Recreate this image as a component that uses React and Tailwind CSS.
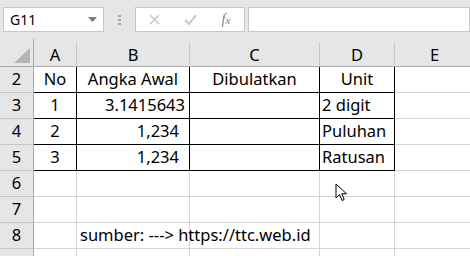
import React from "react";

const COLS = [
  { key: "A", w: 43 },
  { key: "B", w: 113 },
  { key: "C", w: 130 },
  { key: "D", w: 75 },
  { key: "E", w: 80 },
];

const ROWS = [
  { n: 2, cells: [["No", "center"], ["Angka Awal", "center"], ["Dibulatkan", "center"], ["Unit", "center"], ["", ""]], table: true },
  { n: 3, cells: [["1", "center"], ["3.1415643", "right"], ["", ""], ["2 digit", "left"], ["", ""]], table: true },
  { n: 4, cells: [["2", "center"], ["1,234", "right-pad"], ["", ""], ["Puluhan", "left"], ["", ""]], table: true },
  { n: 5, cells: [["3", "center"], ["1,234", "right-pad"], ["", ""], ["Ratusan", "left"], ["", ""]], table: true },
  { n: 6, cells: [["", ""], ["", ""], ["", ""], ["", ""], ["", ""]] },
  { n: 7, cells: [["", ""], ["", ""], ["", ""], ["", ""], ["", ""]] },
  { n: 8, cells: [["", ""], ["sumber: ---> https://ttc.web.id", "overflow"], ["", ""], ["", ""], ["", ""]] },
  { n: "", cells: [["", ""], ["", ""], ["", ""], ["", ""], ["", ""]] },
];

const alignClass = {
  center: "justify-center",
  right: "justify-end pr-[4px]",
  "right-pad": "justify-end pr-[10px]",
  left: "justify-start pl-[2px]",
  overflow: "justify-start pl-[3px] overflow-visible whitespace-nowrap",
  "": "",
};

function Cell({ text, align, width, black }) {
  const border = black
    ? "border-r border-b border-black"
    : "border-r border-b border-[#d4d4d4]";
  return (
    <div
      className={`relative flex items-center shrink-0 h-[26px] ${border} ${alignClass[align]} ${align === "overflow" ? "z-10" : "overflow-hidden"}`}
      style={{ width }}
    >
      <span className="whitespace-nowrap text-[16.5px] text-black leading-none">{text}</span>
    </div>
  );
}

export default function App() {
  return (
    <div className="relative w-[470px] h-[256px] overflow-hidden bg-white font-['Noto_Sans',sans-serif] select-none">
      <div className="h-[39px] bg-[#e6e6e6] flex items-start pt-[7px] pl-[3px]">
        <div className="w-[101px] h-[25px] border border-[#c6c6c6] bg-white flex items-center justify-between pl-[6px] pr-[6px]">
          <span className="text-[14px] text-black">G11</span>
          <svg width="9" height="5" viewBox="0 0 9 5">
            <path d="M0 0 H9 L4.5 5 Z" fill="#7a7a7a" />
          </svg>
        </div>
        <div className="w-[31px] h-[25px] flex flex-col items-center justify-center gap-[2px]">
          <span className="w-[3px] h-[2px] bg-[#a6a6a6]" />
          <span className="w-[3px] h-[2px] bg-[#a6a6a6]" />
          <span className="w-[3px] h-[2px] bg-[#a6a6a6]" />
        </div>
        <div className="w-[110px] h-[25px] border border-[#c6c6c6] bg-white flex items-center">
          <div className="w-[36px] flex justify-center">
            <svg width="11" height="11" viewBox="0 0 11 11">
              <path d="M1 1 L10 10 M10 1 L1 10" stroke="#c3c3c3" strokeWidth="1.4" />
            </svg>
          </div>
          <div className="w-[36px] flex justify-center">
            <svg width="13" height="11" viewBox="0 0 13 11">
              <path d="M1 6 L5 10 L12 1" stroke="#c3c3c3" strokeWidth="1.8" fill="none" />
            </svg>
          </div>
          <div className="w-[36px] flex justify-center">
            <span className="font-['Liberation_Serif',serif] italic text-[14px] text-[#7a7a7a] leading-none">
              f<span className="text-[11px]">x</span>
            </span>
          </div>
        </div>
        <div className="ml-[3px] flex-1 h-[25px] border border-[#c6c6c6] bg-white" />
      </div>

      <div className="flex h-[28px] bg-[#e6e6e6] border-b border-[#ababab]">
        <div className="relative w-[34px] shrink-0 border-r border-[#ababab]">
          <svg className="absolute right-[3px] bottom-[3px]" width="16" height="15" viewBox="0 0 16 15">
            <path d="M16 0 V15 H0 Z" fill="#b4b4b4" />
          </svg>
        </div>
        {COLS.map((c) => (
          <div
            key={c.key}
            className="shrink-0 flex items-center justify-center pt-[2px] border-r border-[#c6c6c6] mt-[3px] h-[24px]"
            style={{ width: c.w }}
          >
            <span className="text-[16.5px] text-black leading-none">{c.key}</span>
          </div>
        ))}
      </div>

      {ROWS.map((r, idx) => (
        <div key={idx} className="flex">
          <div className="w-[34px] h-[26px] shrink-0 bg-[#e6e6e6] border-r border-b border-[#c6c6c6] border-r-[#ababab] flex items-center justify-center">
            <span className="text-[16.5px] text-black leading-none">{r.n}</span>
          </div>
          {r.cells.map(([t, a], i) => (
            <Cell
              key={i}
              text={t}
              align={a}
              width={COLS[i].w}
              black={r.table && i < 4}
            />
          ))}
        </div>
      ))}

      <svg className="absolute left-[335px] top-[183px]" width="14" height="20" viewBox="0 0 14 20">
        <path d="M1 1 L1 15 L4.5 11.5 L7 17.5 L9.2 16.5 L6.8 10.8 L11.5 10.8 Z" fill="#ffffff" stroke="#000000" strokeWidth="1" strokeLinejoin="round" />
      </svg>
    </div>
  );
}
